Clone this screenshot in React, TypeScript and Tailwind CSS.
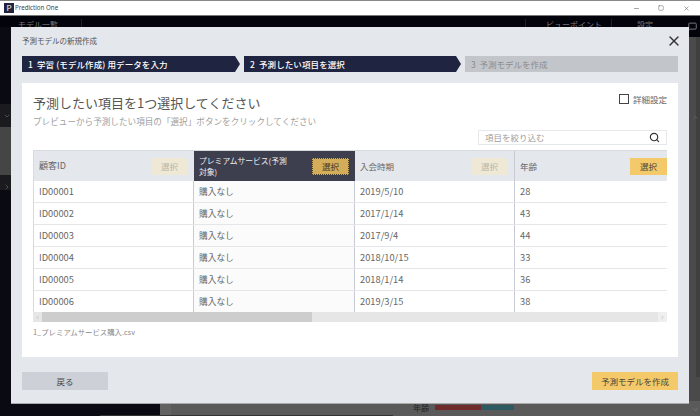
import { Search, X, Minus, Square, ChevronDown, ChevronRight, ChevronLeft, ChevronUp, MessageSquare } from "lucide-react";

const font = "font-['Noto_Sans_CJK_JP','Noto_Sans',sans-serif]";

const rows = [
	["ID00001", "購入なし", "2019/5/10", "28"],
	["ID00002", "購入なし", "2017/1/14", "43"],
	["ID00003", "購入なし", "2017/9/4", "44"],
	["ID00004", "購入なし", "2018/10/15", "33"],
	["ID00005", "購入なし", "2018/1/14", "36"],
	["ID00006", "購入なし", "2019/3/15", "38"],
];

function Step({ label, tail, className }: { label: string; tail?: boolean; className: string }) {
	return (
		<div className={`flex h-4 items-center pl-[6px] text-[8.5px] font-medium tracking-[0.1px] text-white ${className}`}
			style={tail ? { clipPath: "polygon(0 0, calc(100% - 5px) 0, 100% 50%, calc(100% - 5px) 100%, 0 100%)" } : undefined}
		>
			{label}
		</div>
	);
}

function SelectButton({ faded }: { faded?: boolean }) {
	return (
		<button className={`flex h-[17px] w-[37px] items-center justify-center text-[8.5px] ${faded ? "bg-[#efe8d4] text-[#b9b5a8]" : "bg-[#f3c969] text-[#4a4438]"}`}>
			選択
		</button>
	);
}

export default function App() {
	return (
		<div className={`flex h-[416px] w-[700px] flex-col overflow-hidden bg-[#5a5a5a] ${font}`}>
			{/* window chrome */}
			<div className="h-px bg-[#8a8a8a]" />
			<div className="flex h-[15px] items-center border-b border-[#777] bg-white pl-1">
				<div className="flex h-[10px] w-[10px] items-center justify-center bg-[#1f2540] text-[8px] leading-none text-white">P</div>
				<span className="ml-px font-['Noto_Sans'] text-[6.2px] text-[#444]">Prediction One</span>
				<div className="ml-auto flex items-center text-[#666]">
					<Minus size={7} className="mr-[18px]" />
					<Square size={6} className="mr-[19px]" />
					<X size={7} className="mr-[10px]" />
				</div>
			</div>

			{/* app behind the dialog */}
			<div className="relative flex-1">
				<div className="flex h-[11px] bg-[#03030c] pt-[3px] text-[8px] leading-[12px] text-[#777]">
					<span className="ml-[18px] w-[64px] border-r border-[#222]">モデル一覧</span>
					<span className="ml-[443px] w-[87px] border-l border-r border-[#222] pl-[20px]">ビューポイント</span>
					<span className="pl-[25px]">設定</span>
				</div>
				<div className="absolute bottom-0 left-0 top-[11px] w-[160px] bg-[#0a0b12]" />
				<div className="absolute left-0 top-[88px] h-[86px] w-[11px] bg-[#1a1a1f]" />
				<div className="absolute left-0 top-[111px] h-[48px] w-[11px] bg-[#454545]" />
				<ChevronDown size={8} className="absolute left-[3px] top-[96px] text-[#666]" />
				<ChevronRight size={8} className="absolute left-[3px] top-[167px] text-[#666]" />
				<div className="absolute right-0 top-[11px] h-[10px] w-[11px] bg-[#03030c]" />
				<MessageSquare size={9} className="absolute left-[688px] top-[6px] text-[#999]" />
				<div className="absolute right-0 top-[21px] h-[364px] w-[11px] bg-[#4a4a4a]" />
				<div className="absolute right-0 top-[21px] h-[340px] w-[4px] bg-[#3f3f3f]" />
				<ChevronUp size={7} className="absolute left-[692px] top-[98px] text-[#777]" />
				<ChevronDown size={7} className="absolute left-[692px] top-[390px] text-[#888]" />
				<div className="absolute bottom-0 left-[160px] h-[12px] w-[11px] bg-[#626262]" />
				<div className="absolute bottom-0 left-[100px] h-px w-[293px] bg-[#333]" />
				<span className="absolute left-[413px] top-[388px] text-[8px] leading-none text-[#222]">年齢</span>
				<div className="absolute left-[435px] top-[389px] flex h-[5px]">
					<div className="w-[46px] bg-[#6f2a2b]" />
					<div className="w-[33px] bg-[#2d5a60]" />
				</div>

				{/* dialog */}
				<div className="absolute left-[11px] top-[11px] flex h-[377px] w-[678px] flex-col border-b border-[#aaa] bg-[#e4e7ec] pl-[11px] pr-[11px]">
					<div className="flex h-[20px] items-center pt-[8px]">
						<span className="text-[7.5px] leading-[12px] text-[#555]">予測モデルの新規作成</span>
						<X size={16} strokeWidth={2} className="-mr-[4px] ml-auto text-[#333]" />
					</div>

					<div className="mt-[9px] flex gap-[4px]">
						<Step label="1  学習 (モデル作成) 用データを入力" tail className="w-[218px] whitespace-pre bg-[#1f2540]" />
						<Step label="2  予測したい項目を選択" tail className="w-[217px] whitespace-pre bg-[#1f2540]" />
						<div className="flex h-4 flex-1 items-center whitespace-pre bg-[#c2c5c9] pl-[6px] text-[8.5px] text-[#8a8c90]">3  予測モデルを作成</div>
					</div>

					{/* card */}
					<div className="mt-[11px] flex h-[274px] flex-col bg-white px-[11px]">
						<div className="flex items-start justify-between pt-[10px]">
							<div>
								<h1 className="text-[13px] leading-[20px] text-[#555]">予測したい項目を1つ選択してください</h1>
								<p className="mt-[2px] text-[8.6px] leading-[13px] text-[#a0a0a0]">プレビューから予測したい項目の「選択」ボタンをクリックしてください</p>
							</div>
							<label className="flex items-center gap-[4px] text-[8.5px] leading-[12px] text-[#666]">
								<span className="h-[10px] w-[10px] border border-[#444]" />
								詳細設定
							</label>
						</div>

						<div className="mt-[2px] flex h-[15px] w-[189px] items-center self-end border border-[#e6e8ec] pl-[6px] pr-[6px] text-[8.5px] text-[#a0a0a0]">
							項目を絞り込む
							<Search size={11} strokeWidth={2.5} className="ml-auto text-[#333]" />
						</div>

						<div className="mt-[5px] w-[634px]">
							<div className="grid h-[162px] grid-cols-[160px_161px_160px_152px] border-l border-t border-[#d8dade] text-[9.3px] text-[#666]">
								<div className="flex h-[30px] items-center justify-between bg-[#e4e7ec] pl-[5px] pr-[6px] text-[9px]">顧客ID<SelectButton faded /></div>
								<div className="flex h-[30px] items-center justify-between bg-[#3d3f4f] pl-[5px] pr-[6px] text-[7.8px] leading-[11px] text-[#eee]">
									<span className="whitespace-nowrap">プレミアムサービス(予測<br />対象)</span>
									<button className="flex h-[17px] w-[37px] items-center justify-center border border-dotted border-[#4a3f20] bg-[#d4ad5b] text-[8.5px] text-[#3a3424]">選択</button>
								</div>
								<div className="flex h-[30px] items-center justify-between border-r border-[#c9cbd4] bg-[#e4e7ec] pl-[5px] pr-[6px] text-[8.5px]">入会時期<SelectButton faded /></div>
								<div className="flex h-[30px] items-center justify-between bg-[#e4e7ec] pl-[5px] text-[8.5px]">年齢<SelectButton /></div>
								{rows.map((row) => (
									<div key={row[0]} className="col-span-4 grid h-[22px] grid-cols-[160px_161px_160px_152px] border-b border-[#e4e6ea]">
										<div className="flex items-center border-r border-[#c9cbd4] pl-[5px]">{row[0]}</div>
										<div className="flex items-center border-r border-[#c9cbd4] bg-[#fbfbfb] pl-[5px] text-[8.7px]">{row[1]}</div>
										<div className="flex items-center border-r border-[#c9cbd4] pl-[5px]">{row[2]}</div>
										<div className="flex items-center pl-[5px]">{row[3]}</div>
									</div>
								))}
							</div>
							<div className="flex h-[10px] items-center bg-[#e6e6e6]">
								<ChevronLeft size={5} className="ml-[2px] text-[#999]" />
								<div className="ml-[2px] h-full w-[270px] bg-[#cdcdcd]" />
								<div className="ml-auto flex h-full w-[9px] items-center justify-center bg-[#efefef]">
									<ChevronRight size={5} className="text-[#999]" />
								</div>
							</div>
							<p className="mt-[4px] text-[7.4px] leading-[12px] text-[#888]">1_プレミアムサービス購入.csv</p>
						</div>
					</div>

					{/* footer */}
					<div className="mt-[15px] flex justify-between">
						<button className="h-[18px] w-[86px] bg-[#cdd0d6] text-[8.5px] text-[#444]">戻る</button>
						<button className="h-[18px] w-[86px] bg-[#f3c969] text-[8.5px] text-[#4a4438]">予測モデルを作成</button>
					</div>
				</div>
			</div>
		</div>
	);
}
